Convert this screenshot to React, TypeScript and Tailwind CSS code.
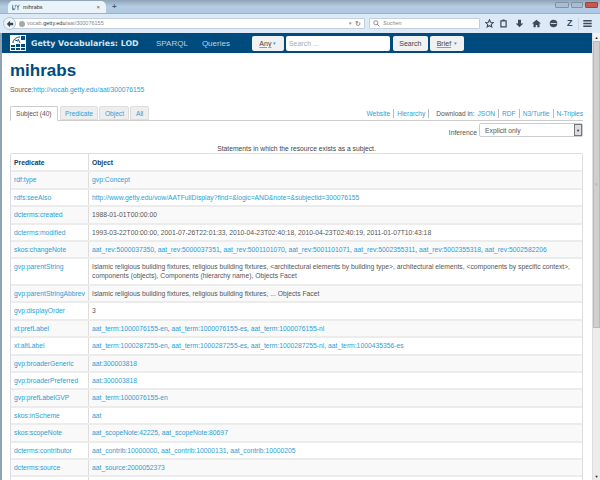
const L = ({ c }: { c: string }) => <a className="text-[#2a9fd6]">{c}</a>;

const Links = ({ items }: { items: string[] }) => (
  <span>
    {items.map((t, i) => (
      <span key={t}>
        <span className="text-[#2a9fd6]">{t}</span>
        {i < items.length - 1 ? <span className="text-[#555]">, </span> : null}
      </span>
    ))}
  </span>
);

const rows: { p: string; o: React.ReactNode; h: string }[] = [
  { p: "rdf:type", o: <L c="gvp:Concept" />, h: "h-[18px]" },
  { p: "rdfs:seeAlso", o: <L c="http://www.getty.edu/vow/AATFullDisplay?find=&logic=AND&note=&subjectid=300076155" />, h: "h-[17px]" },
  { p: "dcterms:created", o: "1988-01-01T00:00:00", h: "h-[18px]" },
  { p: "dcterms:modified", o: "1993-03-22T00:00:00, 2001-07-26T22:01:33, 2010-04-23T02:40:18, 2010-04-23T02:40:19, 2011-01-07T10:43:18", h: "h-[17px]" },
  { p: "skos:changeNote", o: <Links items={["aat_rev:5000037350", "aat_rev:5000037351", "aat_rev:5001101070", "aat_rev:5001101071", "aat_rev:5002355311", "aat_rev:5002355318", "aat_rev:5002582206"]} />, h: "h-[17px]" },
  { p: "gvp:parentString", o: <span>Islamic religious building fixtures, religious building fixtures, &lt;architectural elements by building type&gt;, architectural elements, &lt;components by specific context&gt;,<br />components (objects), Components (hierarchy name), Objects Facet</span>, h: "h-[27px]" },
  { p: "gvp:parentStringAbbrev", o: "Islamic religious building fixtures, religious building fixtures, ... Objects Facet", h: "h-[17px]" },
  { p: "gvp:displayOrder", o: "3", h: "h-[18px]" },
  { p: "xl:prefLabel", o: <Links items={["aat_term:1000076155-en", "aat_term:1000076155-es", "aat_term:1000076155-nl"]} />, h: "h-[17px]" },
  { p: "xl:altLabel", o: <Links items={["aat_term:1000287255-en", "aat_term:1000287255-es", "aat_term:1000287255-nl", "aat_term:1000435356-es"]} />, h: "h-[18px]" },
  { p: "gvp:broaderGeneric", o: <L c="aat:300003818" />, h: "h-[17px]" },
  { p: "gvp:broaderPreferred", o: <L c="aat:300003818" />, h: "h-[17px]" },
  { p: "gvp:prefLabelGVP", o: <L c="aat_term:1000076155-en" />, h: "h-[18px]" },
  { p: "skos:inScheme", o: <L c="aat" />, h: "h-[17px]" },
  { p: "skos:scopeNote", o: <Links items={["aat_scopeNote:42225", "aat_scopeNote:80697"]} />, h: "h-[18px]" },
  { p: "dcterms:contributor", o: <Links items={["aat_contrib:10000000", "aat_contrib:10000131", "aat_contrib:10000205"]} />, h: "h-[17px]" },
  { p: "dcterms:source", o: <L c="aat_source:2000052373" />, h: "h-[17px]" },
  { p: "", o: "", h: "h-[17px]" },
];

const Sep = () => <span className="w-px h-[9px] bg-[#bbb]" />;

export default function App() {
  return (
    <div className="w-[600px] h-[480px] overflow-hidden flex flex-col bg-white text-[6.75px] leading-[9px] text-[#555] font-['Liberation_Sans',sans-serif]">
      {/* title bar */}
      <div className="h-[14px] shrink-0 flex items-end justify-between bg-gradient-to-b from-[#8fa3b8] via-[#b5cce2] to-[#adc7e0] pl-[8px] pr-[2px] border-b border-[#9bb3ca]">
        <div className="flex items-end h-full">
          <div className="w-[98px] h-[12px] bg-[#eaf2fa] rounded-t-[5px] flex items-center pl-[4px] pr-[6px] gap-[3px] text-[#333] text-[5.5px]">
            <svg viewBox="0 0 12 10" className="w-[8px] h-[7px] stroke-[#1c5a80] fill-none"><path d="M1 1v8M1 5l2 4 2-4M7 1l2 4 2-4M9 5v4M5 1v3" /></svg>
            <span className="flex-1">mihrabs</span>
            <span className="text-[#555] text-[6px]">×</span>
          </div>
          <span className="ml-[6px] mb-[1px] text-[8px] leading-[10px] font-bold text-[#44586c]">+</span>
        </div>
        <div className="flex gap-[2px] self-start mt-[2px]">
          <div className="w-[14px] h-[6px] bg-[#a9bdd0] border border-[#7f93a8] rounded-[1px]" />
          <div className="w-[12px] h-[6px] bg-[#a9bdd0] border border-[#7f93a8] rounded-[1px]" />
          <div className="w-[13px] h-[6px] bg-[#c9574b] border border-[#8d4a44] rounded-[1px]" />
        </div>
      </div>
      {/* toolbar */}
      <div className="h-[19px] shrink-0 flex items-center bg-[#dce9f6] pl-[3px] text-[5.5px]">
        <div className="w-[362px] h-[11px] bg-white border border-[#c3d0dc] rounded-l-full flex items-center pr-[3px] text-[#888]">
          <span className="w-[13px] h-[13px] -ml-px shrink-0 rounded-full bg-[#eef3f8] border border-[#b5c3d0] flex items-center justify-center">
            <svg viewBox="0 0 10 10" className="w-[8px] h-[8px] fill-[#3a4650]"><path d="M5 1 1 5l4 4V6.5h4v-3H5z" /></svg>
          </span>
          <span className="w-[6px] h-[6px] ml-[3px] rounded-full bg-[#a2a8ad]" />
          <span className="ml-[2px] flex-1 whitespace-nowrap">vocab.<span className="text-[#333]">getty.edu</span>/aat/300076155</span>
          <span className="text-[#888] text-[5px] mr-[3px]">▾</span>
          <span className="text-[#555] text-[7px] leading-[7px]">↻</span>
        </div>
        <div className="ml-[4px] w-[111px] h-[11px] bg-white border border-[#c3d0dc] rounded-[1px] flex items-center pl-[3px] gap-[3px] text-[#888] italic">
          <svg viewBox="0 0 10 10" className="w-[7px] h-[7px] stroke-[#667] fill-none"><circle cx="4" cy="4" r="3" /><path d="m6 6 3 3" /></svg>
          Suchen
        </div>
        <div className="flex items-center">
          <svg viewBox="0 0 12 12" className="ml-[5px] w-[9px] h-[9px] stroke-[#3f4a55] fill-none stroke-[1.4]"><path d="m6 1 1.5 3.3 3.5.4-2.6 2.4.7 3.5L6 8.9l-3.1 1.7.7-3.5L1 4.7l3.5-.4z" /></svg>
          <svg viewBox="0 0 12 12" className="ml-[5px] w-[9px] h-[9px] stroke-[#3f4a55] fill-none stroke-[1.6]"><path d="M2.5 2.5h7v8h-7zM4.5 1.5h3" /></svg>
          <svg viewBox="0 0 12 12" className="ml-[7px] w-[9px] h-[9px] fill-[#3f4a55]"><path d="M4 1h4v5h3L6 11 1 6h3z" /></svg>
          <svg viewBox="0 0 12 12" className="ml-[8px] w-[9px] h-[9px] fill-[#3f4a55]"><path d="M6 1 0 6h2v5h3V8h2v3h3V6h2z" /></svg>
          <svg viewBox="0 0 12 12" className="ml-[8px] w-[9px] h-[9px]"><circle cx="6" cy="6" r="5" fill="#3f4a55" /><path d="M2 6h8" stroke="#dce9f6" strokeWidth="1.2" /></svg>
          <span className="ml-[9px] w-[6px] text-[9px] leading-[9px] font-bold text-[#3f4a55]">Z</span>
          <span className="ml-[5px] w-px h-[12px] bg-[#c6d4e2]" />
          <svg viewBox="0 0 12 10" className="ml-[4px] w-[9px] h-[7px] fill-[#3f4a55]"><path d="M0 0h12v2H0zM0 4h12v2H0zM0 8h12v2H0z" /></svg>
        </div>
      </div>
      <div className="flex-1 min-h-0 flex border-l-[2px] border-[#8ea2b6]">
        <div className="flex-1 min-w-0 flex flex-col overflow-hidden">
          {/* navbar */}
          <div className="h-[20px] shrink-0 bg-[#004b7d] flex items-center pl-[8px]">
            <svg viewBox="0 0 16 16" className="w-[16px] h-[16px]">
              <rect width="16" height="16" fill="#fff" />
              <path d="M1 10h4v2H1zM6 13h4v2H6zM11 13h4v2h-4zM1 13h4v2H1zM11 1h4v4h-4zM6 9h4v3H6zM11 9h4v3h-4z" fill="#004b7d" />
              <path d="M3 8c0-4 4-6 7-6M8 4l2 4M5 5l3 1" stroke="#004b7d" strokeWidth="1" fill="none" />
            </svg>
            <span className="ml-[5px] w-[125px] font-['DejaVu_Sans',sans-serif] font-bold text-[7.85px] text-[#d8e4ec] whitespace-nowrap">Getty Vocabularies: LOD</span>
            <span className="text-[8px] text-[#c0d2de] whitespace-nowrap">SPARQL</span>
            <span className="ml-[14px] text-[8px] text-[#c0d2de]">Queries</span>
            <div className="ml-[22px] w-[32px] h-[15px] bg-[#f1f1f1] rounded-[2px] flex items-center justify-center gap-[2px] text-[#444] text-[7px]">
              <span className="underline decoration-[#999]">Any</span>
              <span className="text-[#2a9fd6] text-[5px]">▾</span>
            </div>
            <div className="ml-[2px] w-[104px] h-[15px] bg-white rounded-[2px] flex items-center pl-[3px] text-[#aaa] text-[7px]">Search ...</div>
            <div className="ml-[3px] w-[35px] h-[15px] bg-[#f1f1f1] rounded-[2px] flex items-center justify-center text-[#444] text-[7px]">Search</div>
            <div className="ml-[2px] w-[34px] h-[15px] bg-[#f1f1f1] rounded-[2px] flex items-center justify-center gap-[3px] text-[#444] text-[7px]">
              <span className="underline decoration-[#999]">Brief</span>
              <span className="text-[#2a9fd6] text-[5px]">▾</span>
            </div>
          </div>
          {/* content */}
          <div className="flex-1 min-h-0 pl-[8px] pr-[9px] flex flex-col">
            <h1 className="mt-[8px] text-[#004b7d] font-bold text-[17px] leading-[20px]">mihrabs</h1>
            <div className="mt-[4px]">Source:<L c="http://vocab.getty.edu/aat/300076155" /></div>
            <div className="mt-[12px] h-[15px] shrink-0 flex items-end justify-between border-b border-[#ccc] text-[6.6px]">
              <div className="flex gap-px">
                <span className="h-[15px] -mb-px px-[5px] flex items-center bg-white border border-[#ccc] border-b-white rounded-t-[2px] text-[#555]">Subject (40)</span>
                <span className="h-[14px] ml-px px-[4.5px] flex items-center bg-[#eee] border border-[#ddd] rounded-t-[2px] text-[#2a9fd6]">Predicate</span>
                <span className="h-[14px] px-[4.5px] flex items-center bg-[#eee] border border-[#ddd] rounded-t-[2px] text-[#2a9fd6]">Object</span>
                <span className="h-[14px] px-[4.5px] flex items-center bg-[#eee] border border-[#ddd] rounded-t-[2px] text-[#2a9fd6]">All</span>
              </div>
              <div className="flex items-center gap-[3px] pb-[2px] whitespace-nowrap">
                <L c="Website" /><Sep /><L c="Hierarchy" /><Sep />
                <span className="ml-[4px]">Download in:</span>
                <L c="JSON" /><Sep /><L c="RDF" /><Sep /><L c="N3/Turtle" /><Sep /><L c="N-Triples" />
              </div>
            </div>
            <div className="mt-[2px] h-[14px] shrink-0 flex justify-end items-center gap-[2px]">
              <span className="mt-[4px]">Inference</span>
              <div className="w-[104px] h-[14px] border border-[#ccc] rounded-[2px] flex items-center justify-between pl-[5px] bg-white">
                <span>Explicit only</span>
                <span className="w-[8px] h-[12px] bg-[#ddd] border border-[#777] flex items-center justify-center text-[#222] text-[4px]">▼</span>
              </div>
            </div>
            <div className="mt-[7px] h-[9px] shrink-0 text-center text-[#444]">Statements in which the resource exists as a subject.</div>
            <div className="border border-b-0 border-[#ddd] rounded-t-[2px] flex flex-col">
              <div className="h-[16px] shrink-0 flex font-bold text-[#123c5e]">
                <div className="w-[78px] shrink-0 pl-[3px] pt-[4px] border-r border-[#ddd]">Predicate</div>
                <div className="pl-[3px] pt-[4px]">Object</div>
              </div>
              {rows.map((r, i) => (
                <div key={i} className={`${r.h} shrink-0 flex border-t-2 border-[#ececec] ${i % 2 === 0 ? "bg-[#f9f9f9]" : "bg-white"}`}>
                  <div className="w-[78px] shrink-0 pl-[3px] pt-[3px] border-r border-[#ddd] text-[#2a9fd6] whitespace-nowrap">{r.p}</div>
                  <div className="pl-[3px] pt-[3px] whitespace-nowrap">{r.o}</div>
                </div>
              ))}
            </div>
          </div>
        </div>
        {/* scrollbar */}
        <div className="w-[8px] shrink-0 flex flex-col bg-[#ececec] border-l border-[#ddd]">
          <div className="h-[8px] bg-[#f3f3f3] flex items-center justify-center text-[4px] text-[#222]">▲</div>
          <div className="h-[287px] bg-[#cfcfcf] border border-[#bbb] flex items-center justify-center text-[4px] text-[#888]">≡</div>
          <div className="flex-1" />
          <div className="h-[8px] flex items-center justify-center text-[4px] text-[#222]">▼</div>
        </div>
      </div>
    </div>
  );
}
